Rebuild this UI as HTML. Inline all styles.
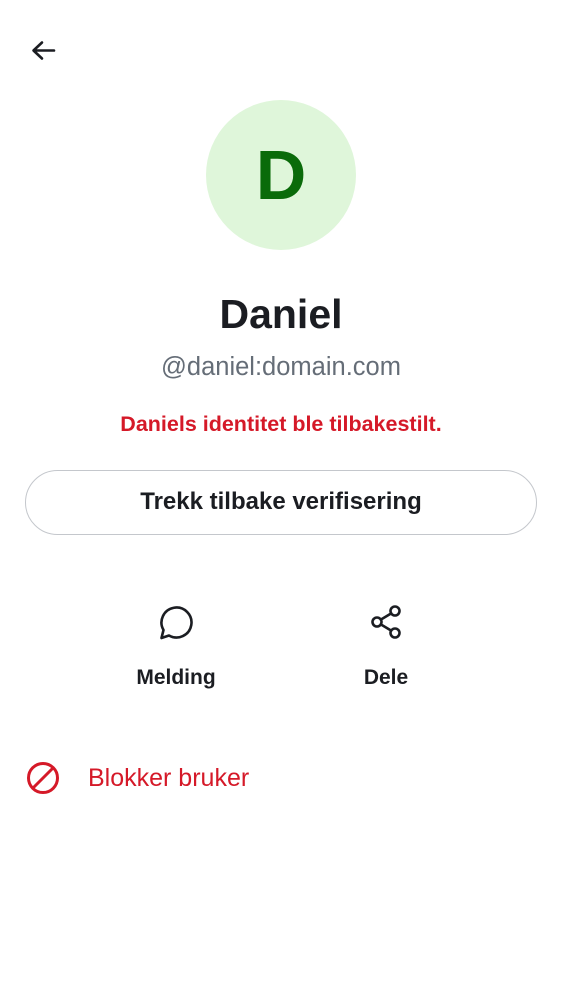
<!DOCTYPE html>
<html><head><meta charset="utf-8"><style>
*{margin:0;padding:0;box-sizing:border-box}
body{width:562px;height:1000px;background:#fff;font-family:"Liberation Sans",sans-serif;position:relative;overflow:hidden;color:#1b1d22}
.abs{position:absolute}
.c{left:0;width:562px;text-align:center}
</style></head><body>
<svg class="abs" style="left:28px;top:36px" width="30" height="30" viewBox="0 0 30 30"><path d="M26 14.5H7M14 6.5L5.5 14.5L14 22.5" fill="none" stroke="#1b1d22" stroke-width="2.6" stroke-linecap="round" stroke-linejoin="round"/></svg>
<div class="abs" style="left:206px;top:100px;width:150px;height:150px;border-radius:50%;background:#dff6da;color:#0a6b0a;font-size:70px;font-weight:bold;text-align:center;line-height:150px">D</div>
<div class="abs c" style="top:290px;font-size:41px;font-weight:bold;line-height:48px">Daniel</div>
<div class="abs c" style="top:352px;font-size:25.5px;color:#656d77;line-height:30px">@daniel:domain.com</div>
<div class="abs c" style="top:411px;font-size:21.5px;color:#d51928;font-weight:bold;line-height:26px">Daniels identitet ble tilbakestilt.</div>
<div class="abs" style="left:25px;top:470px;width:512px;height:65px;border:1.5px solid #c4c7cc;border-radius:33px;text-align:center;line-height:62px;font-size:24px;font-weight:bold;color:#1b1d22">Trekk tilbake verifisering</div>
<svg class="abs" style="left:158px;top:604px" width="36" height="38" viewBox="0 0 36 38"><path d="M3.5 34L5.5 26A15 15 0 1 1 11 31.5Z" fill="none" stroke="#1b1d22" stroke-width="2.6" stroke-linejoin="round"/></svg>
<div class="abs" style="left:96px;width:160px;text-align:center;top:665px;font-size:21px;font-weight:bold;line-height:26px">Melding</div>
<svg class="abs" style="left:370px;top:604px" width="34" height="36" viewBox="0 0 34 36"><g fill="none" stroke="#1b1d22" stroke-width="2.6"><circle cx="7" cy="18" r="4.5"/><circle cx="25" cy="7" r="4.5"/><circle cx="25" cy="29" r="4.5"/><path d="M11 15.5L21 9.5M11 20.5L21 26.5"/></g></svg>
<div class="abs" style="left:306px;width:160px;text-align:center;top:665px;font-size:21px;font-weight:bold;line-height:26px">Dele</div>
<svg class="abs" style="left:26px;top:761px" width="34" height="34" viewBox="0 0 34 34"><circle cx="17" cy="17" r="14.5" fill="none" stroke="#d51928" stroke-width="3"/><path d="M7 27L27 7" stroke="#d51928" stroke-width="3"/></svg>
<div class="abs" style="left:88px;top:763px;font-size:25px;color:#d51928;line-height:30px">Blokker bruker</div>
</body></html>
